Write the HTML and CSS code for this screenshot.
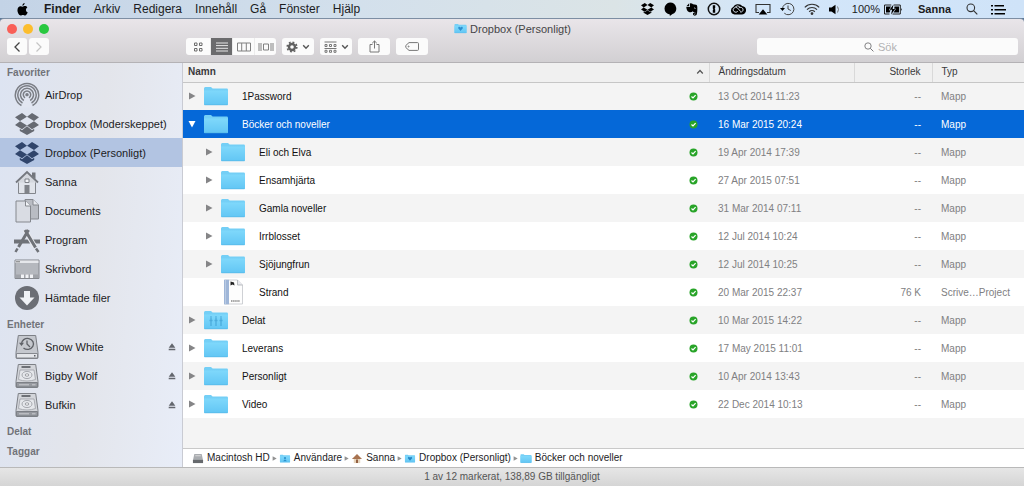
FILE: index.html
```html
<!DOCTYPE html>
<html lang="sv">
<head>
<meta charset="utf-8">
<title>Dropbox (Personligt)</title>
<link rel="stylesheet" href="styles.css">
</head>
<body>
<svg class="defs" aria-hidden="true">
  <defs>
    <linearGradient id="blue" x1="0" y1="0" x2="0" y2="1"><stop offset="0" stop-color="#7fd8fb"/><stop offset="1" stop-color="#62c6f4"/></linearGradient>
    <symbol id="folder" viewBox="0 0 26 20"><path d="M1 2.5Q1 1 2.3 1H8l1.600 1.600h14.2Q25 2.600 25 4v14q0 1-1 1H2q-1 0-1-1z" fill="#74cff6"/><path d="M1 4.500h24v13.500q0 1-1 1H2q-1 0-1-1z" fill="url(#blue)"/><path d="M1.500 18.800h23" stroke="#58b7e6" stroke-width=".7"/></symbol>
    <symbol id="dropbox" viewBox="0 0 24 22"><path d="M7 0l5 3.800-7 4.200-5-3.800zM17 0l7 4.200L19 8l-7-4.200zM0 12l5-3.800 7 4.200-5 3.800zM19 8.200l5 3.800-7 4.200-5-3.800zM7 17.200l5-4 5 4 2.200-1.400v2.200L12 22l-7.200-4v-2.200z"/></symbol>
    <symbol id="tri" viewBox="0 0 8 8"><path d="M1 .5l6.500 3.500L1 7.500z"/></symbol>
    <symbol id="synced" viewBox="0 0 9 9"><circle cx="4.500" cy="4.500" r="4" fill="#28a428"/><path d="M2.500 4.500l1.500 1.500 2.600-2.800" fill="none" stroke="#fff" stroke-width="1.200"/></symbol>
    <symbol id="eject" viewBox="0 0 8 8"><path d="M4 .3L7.300 4.700H.7zM.7 5.800h6.600v1.500H.7z"/></symbol>
    <symbol id="chevron" viewBox="0 0 8 6"><path d="M1.200 1.300L4 4.200l2.800-2.900" fill="none" stroke="#555" stroke-width="1.400"/></symbol>
    <symbol id="search" viewBox="0 0 12 12"><circle cx="4.800" cy="4.800" r="3.800" fill="none" stroke="currentColor" stroke-width="1.100"/><path d="M7.600 7.600l3.700 3.700" stroke="currentColor" stroke-width="1.200"/></symbol>
    <symbol id="disk" viewBox="0 0 26 26"><path d="M4.300 1.500h17.400l2.300 17v5q0 1-1 1H3q-1 0-1-1v-5z" fill="#d3d5da" stroke="#7d8086"/><path d="M2.500 19.500h21v4.500h-21z" fill="#96999f" stroke="#7d8086"/><path d="M7.500 3h9v2h-9z" fill="#6d7076"/><path d="M6 7h14l1.500 9.500q-4 1.500-8.500 1.500t-8.500-1.500z" fill="#e5e7eb" stroke="#9da0a6" stroke-width=".8"/><ellipse cx="13" cy="12" rx="5" ry="3.600" fill="none" stroke="#95989e" stroke-width=".8"/><ellipse cx="13" cy="12" rx="1.800" ry="1.200" fill="#fff" stroke="#85888e" stroke-width=".8"/><path d="M5 21.800h10M18 21.800h3.500" stroke="#c9cbd0"/></symbol>
  </defs>
</svg>

<header class="menubar">
  <svg class="apple" viewBox="0 0 12 14"><path d="M8.300 0c.1 1.500-1 2.900-2.400 3C5.700 1.600 7 .2 8.300 0zM6.200 3.900c.6 0 1.300-.6 2.500-.6 1 0 2 .5 2.600 1.400-2.300 1.400-1.900 4.400.4 5.300C11 12 9.900 13.500 8.800 13.500c-.9 0-1.300-.5-2.400-.5s-1.500.5-2.400.5C2.300 13.500.5 10.400.5 7.800c0-2.700 1.700-4.300 3.400-4.300 1 0 1.800.4 2.300.4z"/></svg>
  <nav class="menus">
    <button class="app">Finder</button><button>Arkiv</button><button>Redigera</button><button>Innehåll</button><button>Gå</button><button>Fönster</button><button>Hjälp</button>
  </nav>
  <div class="extras">
    <svg width="13" height="12"><use href="#dropbox"/></svg>
    <svg width="14" height="14" viewBox="0 0 14 14"><path d="M7 .6a6.200 6 0 0 1 2.500 11.500L6.800 14v-1.500A6.200 6 0 0 1 7 .6z"/></svg>
    <svg width="12" height="13" viewBox="0 0 12 13"><path d="M3.200 .3v2.900H.4zM4 .2l2 .2 1 .8 3 .5c1 .2 1.200 1 1.300 2.500.1 3 0 5.500-.6 7.300-.4 1.400-3.100 1.500-3.600.3-.5-1.600.6-2.500 2.100-2.200v1.200c-.8-.2-1.200.2-.8.8.9.300 1.100-.8.900-2.300-1 .2-2.100-.2-2.600-1-.7 1-2.400 1-3.800.6C1.200 8.500.5 6.400.3 4h3.100c.4 0 .6-.2.6-.6z"/><path d="M8 5.300q.8-.8 1.500.2" stroke="#dfeaf6" stroke-width=".8" fill="none"/></svg>
    <svg width="14" height="14" viewBox="0 0 14 14"><circle cx="7" cy="7" r="5.700" fill="none" stroke="#111" stroke-width="1.500"/><path d="M5.800 3.300h2.400v2.800l-.6.600.6.700v3.300H5.800V7.900l.6-.6-.6-.7z"/></svg>
    <svg width="16" height="12" viewBox="0 0 16 12"><path d="M4.500 11.500A4 4 0 0 1 3.500 3.800a5 4.500 0 0 1 8.500-.9 4.300 4.300 0 0 1-.5 8.600z"/><path d="M7.800 8.300a2.600 2.400 0 1 1-.2-3.200l3.200 3.600M5.500 3.600q2.500-1.800 4.500.5M8.800 4.900a2.600 2.400 0 1 1 1.500 4.200" fill="none" stroke="#dfeaf6" stroke-width=".9"/></svg>
    <svg width="16" height="13" viewBox="0 0 16 13"><path d="M4 9.500H1v-8h14v8h-3" fill="none" stroke="#333" stroke-width="1.100"/><path d="M8 6.300l4.300 5.200H3.700z"/></svg>
    <svg width="15" height="14" viewBox="0 0 15 14"><path d="M2.500 7a5.700 5.700 0 1 1 1.800 4.200M8 3.500V7l2.800 1.500" fill="none" stroke="#444"/><path d="M0 6h5L2.500 9z"/></svg>
    <svg width="16" height="12" viewBox="0 0 16 12" fill="none" stroke="#333" stroke-width="1.200"><path d="M.8 4.300a10 10 0 0 1 14.400 0M3 6.600a7 7 0 0 1 10 0M5.200 8.800a4 4 0 0 1 5.600 0"/><circle cx="8" cy="10.600" r=".8" fill="#222"/></svg>
    <svg width="11" height="11" viewBox="0 0 11 11"><path d="M0 3.500h2.500L6.500.7v9.600L2.500 7.500H0z"/><path d="M8.500 2.500q2 3 0 6" fill="none" stroke="#777"/></svg>
    <span class="percent">100%</span>
    <svg width="19" height="11" viewBox="0 0 19 11"><path d="M.5 1h6.800M.5 10h5M.5 1v9M9.800 1h6.500v9H8.500" fill="none" stroke="#222"/><path d="M2 2.500h5L4.800 6.200h1.700L5.600 8.500H2zM10.500 2.500h4.500v6H9.500l2.500-3.700h-1.800zM9.500.5L5.500 5.800h2.600L7 10.500l4.300-5.400H8.600zM17.200 4q1.500 1.500 0 3z"/></svg>
    <span class="user">Sanna</span>
    <svg width="12" height="12" color="#333"><use href="#search"/></svg>
    <svg width="15" height="11" viewBox="0 0 15 11"><path d="M0 1h2v1.500H0zM0 5h2v1.500H0zM0 9h2v1.500H0zM3.500 1H13v1.500H3.500zM3.500 5H15v1.500H3.500zM3.500 9H14v1.500H3.500z"/></svg>
  </div>
</header>

<div class="window">
  <header class="toolbar">
    <div class="titlebar">
      <div class="lights"><button class="close" aria-label="Stäng"></button><button class="mini" aria-label="Minimera"></button><button class="full" aria-label="Helskärm"></button></div>
      <h1><svg width="13" height="11"><use href="#folder"/><path d="M5 3.500l1.500 1L8 3.500l1 1.500-2.500 3L4 5z" fill="#2d8fd0"/></svg>Dropbox (Personligt)</h1>
    </div>
    <div class="tools">
      <div class="history">
        <button aria-label="Bakåt"><svg width="8" height="12" viewBox="0 0 8 12"><path d="M6.500 1.500L2 6l4.500 4.500" fill="none" stroke="#444" stroke-width="1.300"/></svg></button>
        <button aria-label="Framåt"><svg width="8" height="12" viewBox="0 0 8 12"><path d="M1.500 1.500L6 6l-4.500 4.500" fill="none" stroke="#c4c4c4" stroke-width="1.200"/></svg></button>
      </div>
      <div class="views">
        <button aria-label="Symboler"><svg width="9" height="10" viewBox="0 0 9 10" fill="none" stroke="#6c6c6c"><path d="M.5 1h2.500v2.500H.5zM5.500 1H8v2.500H5.500zM.5 6.500h2.500V9H.5zM5.500 6.500H8V9H5.500z"/></svg></button>
        <button class="on" aria-label="Lista"><svg width="12" height="10" viewBox="0 0 12 10"><path d="M0 1h12M0 3.600h12M0 6.300h12M0 9h12" stroke="#e6e6e6"/></svg></button>
        <button aria-label="Kolumner"><svg width="14" height="10" viewBox="0 0 14 10" fill="none" stroke="#808080"><path d="M.5 1h13v8H.500zM4.700 1v8M9.300 1v8"/></svg></button>
        <button aria-label="Cover Flow"><svg width="16" height="10" viewBox="0 0 16 10" fill="none" stroke="#808080"><path d="M1 1v8M3 1v8M5.500 2h5v6h-5zM13 1v8M15 1v8"/></svg></button>
      </div>
      <button class="tool" aria-label="Åtgärd"><svg width="12" height="12" viewBox="0 0 12 12"><circle cx="6" cy="6" r="3" fill="none" stroke="#606060" stroke-width="2.400"/><circle cx="6" cy="6" r="4.800" fill="none" stroke="#606060" stroke-width="1.600" stroke-dasharray="1.880"/></svg><svg width="8" height="6"><use href="#chevron"/></svg></button>
      <button class="tool" aria-label="Ordna"><svg width="13" height="12" viewBox="0 0 13 12" fill="none" stroke="#777"><path d="M.5 1h12M1 3.500h2v2H1zM5.500 3.500h2v2h-2zM10 3.500h2v2h-2zM.5 7.500h12M1 9.300h2v2H1zM5.500 9.300h2v2h-2zM10 9.300h2v2h-2z"/></svg><svg width="8" height="6"><use href="#chevron"/></svg></button>
      <button class="tool" aria-label="Dela"><svg width="11" height="13" viewBox="0 0 11 13" fill="none" stroke="#777"><path d="M3.500 4.500H1v7.500h9V4.500H7.500M5.500 8.500V1M3.200 3.200L5.500 1l2.300 2.200"/></svg></button>
      <button class="tool" aria-label="Etiketter"><svg width="14" height="9" viewBox="0 0 14 9" fill="none" stroke="#777"><path d="M4 .6h8.500q1 0 1 1v5.800q0 1-1 1H4L.8 5.500v-2z"/><circle cx="3.600" cy="4.500" r=".5"/></svg></button>
      <label class="search"><svg width="10" height="10"><use href="#search"/></svg><input type="text" placeholder="Sök" aria-label="Sök"></label>
    </div>
  </header>

  <div class="content">
    <aside class="sidebar">
      <h2>Favoriter</h2>
      <ul>
        <li><a href="#"><svg viewBox="0 0 26 26" fill="none" stroke="#7b7e85" stroke-width="1.500"><path d="M7.500 23.500a11.700 11.700 0 1 1 11 0M8.500 21a9.200 9.200 0 1 1 9 0M9.800 18.500a6.500 6.500 0 1 1 6.400 0M11 15.800a3.700 3.700 0 1 1 4 0"/><circle cx="13" cy="12.700" r="1" fill="#6b6e75"/><path d="M13 14l-6 11.500h12z" fill="#e2e6f1" stroke="none"/></svg>AirDrop</a></li>
        <li><a href="#"><svg class="box" viewBox="0 0 24 22"><use href="#dropbox"/></svg>Dropbox (Moderskeppet)</a></li>
        <li class="current"><a href="#"><svg class="box" viewBox="0 0 24 22"><use href="#dropbox"/></svg>Dropbox (Personligt)</a></li>
        <li><a href="#"><svg viewBox="0 0 26 26"><path d="M4.500 12.500h17v12h-17z" fill="#e1e4ea" stroke="#83868c"/><path d="M18 3.500h3.500V10L18 7z" fill="#73767c"/><path d="M2 13.500L13 3l11 10.500" fill="#d5d8de" stroke="#75787e" stroke-width="1.800"/><path d="M10.500 16h5v9h-5z" fill="#7f8288"/><path d="M11 10h4v3.500h-4z" fill="#f3f4f8" stroke="#7f8288"/></svg>Sanna</a></li>
        <li><a href="#"><svg viewBox="0 0 26 26" stroke="#85888e"><path d="M11 1.500h8l5.500 5.500v14H11z" fill="#b9bcc3"/><path d="M19 1.500V7h5.500" fill="#e7e9ee"/><path d="M2 3h9.500l5 5v16H2z" fill="#d9dce3"/><path d="M11.500 3v5h5" fill="#f2f4f8"/></svg>Documents</a></li>
        <li><a href="#"><svg viewBox="0 0 26 26" stroke="#6f7278" fill="none"><path d="M0 14.500h26" stroke-width="4"/><path d="M11 3l10 17" stroke="#e9ebf0" stroke-width="5"/><path d="M14.500 3L4.500 20M11 3l10.500 17.500" stroke-width="3"/><path d="M3.500 21.500L1.500 25M22 21.500l2.500 3.500" stroke-width="2.500"/></svg>Program</a></li>
        <li><a href="#"><svg viewBox="0 0 26 26"><path d="M1 4h24v18.500H1z" fill="#b5b8be" stroke="#85888e"/><path d="M1.500 4.500h23v2.500h-23z" fill="#e5e7eb"/><path d="M2 5.800h4" stroke="#777"/><path d="M1.500 18.500h23V22h-23z" fill="#a0a3a9"/><path d="M7 18.500h3V22H7zM11.500 18.500h3V22h-3zM16 18.500h3V22h-3z" fill="#f1f2f5"/></svg>Skrivbord</a></li>
        <li><a href="#"><svg viewBox="0 0 26 26"><circle cx="13" cy="13" r="12" fill="#6b6e75"/><path d="M10 6h6v6.500h4.500L13 20.500l-7.500-8H10z" fill="#f0f2f6"/></svg>Hämtade filer</a></li>
      </ul>
      <h2 class="spaced">Enheter</h2>
      <ul>
        <li><a href="#"><svg viewBox="0 0 26 26"><path d="M4.300 1.500h17.400l2.300 17v5q0 1-1 1H3q-1 0-1-1v-5z" fill="#c5c8ce" stroke="#7d8086"/><path d="M2.500 19.500h21V24h-21z" fill="#e4e6ea" stroke="#85888e"/><path d="M7.500 10a6 5.500 0 1 1 2 4M13 6.500V10l3 3" fill="none" stroke="#5e6167" stroke-width="1.300"/><path d="M5 8.800h5L7.500 12zM20 21h1.500v1.500H20z" fill="#5e6167"/></svg>Snow White</a><button aria-label="Mata ut Snow White"><svg width="8" height="8"><use href="#eject"/></svg></button></li>
        <li><a href="#"><svg><use href="#disk"/></svg>Bigby Wolf</a><button aria-label="Mata ut Bigby Wolf"><svg width="8" height="8"><use href="#eject"/></svg></button></li>
        <li><a href="#"><svg><use href="#disk"/></svg>Bufkin</a><button aria-label="Mata ut Bufkin"><svg width="8" height="8"><use href="#eject"/></svg></button></li>
      </ul>
      <h2 class="spaced">Delat</h2>
      <h2 class="spaced">Taggar</h2>
    </aside>

    <main class="files">
      <table>
        <colgroup><col><col class="c-date"><col class="c-size"><col class="c-type"></colgroup>
        <thead><tr><th class="sorted"><div>Namn<svg width="8" height="6" viewBox="0 0 8 6"><path d="M1.200 4.500L4 1.500l2.800 3" fill="none" stroke="#555" stroke-width="1.200"/></svg></div></th><th>Ändringsdatum</th><th class="size">Storlek</th><th>Typ</th></tr></thead>
        <tbody>
          <tr><td><div class="name"><button aria-label="Visa"><svg><use href="#tri"/></svg></button><svg class="icon"><use href="#folder"/></svg><span>1Password</span><svg class="ok"><use href="#synced"/></svg></div></td><td>13 Oct 2014 11:23</td><td class="size">--</td><td>Mapp</td></tr>
          <tr class="selected"><td><div class="name"><button class="open" aria-label="Dölj"><svg><use href="#tri"/></svg></button><svg class="icon"><use href="#folder"/></svg><span>Böcker och noveller</span><svg class="ok"><use href="#synced"/></svg></div></td><td>16 Mar 2015 20:24</td><td class="size">--</td><td>Mapp</td></tr>
          <tr><td><div class="name child"><button aria-label="Visa"><svg><use href="#tri"/></svg></button><svg class="icon"><use href="#folder"/></svg><span>Eli och Elva</span><svg class="ok"><use href="#synced"/></svg></div></td><td>19 Apr 2014 17:39</td><td class="size">--</td><td>Mapp</td></tr>
          <tr><td><div class="name child"><button aria-label="Visa"><svg><use href="#tri"/></svg></button><svg class="icon"><use href="#folder"/></svg><span>Ensamhjärta</span><svg class="ok"><use href="#synced"/></svg></div></td><td>27 Apr 2015 07:51</td><td class="size">--</td><td>Mapp</td></tr>
          <tr><td><div class="name child"><button aria-label="Visa"><svg><use href="#tri"/></svg></button><svg class="icon"><use href="#folder"/></svg><span>Gamla noveller</span><svg class="ok"><use href="#synced"/></svg></div></td><td>31 Mar 2014 07:11</td><td class="size">--</td><td>Mapp</td></tr>
          <tr><td><div class="name child"><button aria-label="Visa"><svg><use href="#tri"/></svg></button><svg class="icon"><use href="#folder"/></svg><span>Irrblosset</span><svg class="ok"><use href="#synced"/></svg></div></td><td>12 Jul 2014 10:24</td><td class="size">--</td><td>Mapp</td></tr>
          <tr><td><div class="name child"><button aria-label="Visa"><svg><use href="#tri"/></svg></button><svg class="icon"><use href="#folder"/></svg><span>Sjöjungfrun</span><svg class="ok"><use href="#synced"/></svg></div></td><td>12 Jul 2014 10:25</td><td class="size">--</td><td>Mapp</td></tr>
          <tr><td><div class="name child"><i></i><svg class="icon doc" viewBox="0 0 26 26"><path d="M4.500 1h13l5 5v19h-18z" fill="#fdfdfd" stroke="#c3c5ca" stroke-width=".8"/><path d="M4 .8h5v24.500H4z" fill="#9fb6d8"/><path d="M5.500 1v24" stroke="#bacbe3"/><path d="M17.500 1v5h5" fill="#e9eaee" stroke="#aaadb3" stroke-width=".8"/><path d="M10.500 2.500l3.500 1 .5 3-2-1-2 1z" fill="#222"/><path d="M11 22h9" stroke="#888" stroke-width="1.500" stroke-dasharray="1.500 .6"/></svg><span>Strand</span><svg class="ok"><use href="#synced"/></svg></div></td><td>20 Mar 2015 22:37</td><td class="size">76 K</td><td>Scrive…Project</td></tr>
          <tr><td><div class="name"><button aria-label="Visa"><svg><use href="#tri"/></svg></button><svg class="icon" viewBox="0 0 26 20"><use href="#folder"/><path d="M8 8v8M13 8v8M18 8v8M6.500 10.500h3M11.500 10.500h3M16.500 10.500h3" stroke="#4bacdc" stroke-width="1.300"/><path d="M7.300 7h1.400M12.300 7h1.400M17.300 7h1.400" stroke="#4bacdc" stroke-width="1.500"/></svg><span>Delat</span><svg class="ok"><use href="#synced"/></svg></div></td><td>10 Mar 2015 14:22</td><td class="size">--</td><td>Mapp</td></tr>
          <tr><td><div class="name"><button aria-label="Visa"><svg><use href="#tri"/></svg></button><svg class="icon"><use href="#folder"/></svg><span>Leverans</span><svg class="ok"><use href="#synced"/></svg></div></td><td>17 May 2015 11:01</td><td class="size">--</td><td>Mapp</td></tr>
          <tr><td><div class="name"><button aria-label="Visa"><svg><use href="#tri"/></svg></button><svg class="icon"><use href="#folder"/></svg><span>Personligt</span><svg class="ok"><use href="#synced"/></svg></div></td><td>10 Apr 2014 13:43</td><td class="size">--</td><td>Mapp</td></tr>
          <tr><td><div class="name"><button aria-label="Visa"><svg><use href="#tri"/></svg></button><svg class="icon"><use href="#folder"/></svg><span>Video</span><svg class="ok"><use href="#synced"/></svg></div></td><td>22 Dec 2014 10:13</td><td class="size">--</td><td>Mapp</td></tr>
        </tbody>
      </table>
      <div class="blank"></div>
      <nav class="path">
        <a href="#"><svg viewBox="0 0 12 12"><path d="M2 1h8l1.500 7v3H.5V8z" fill="#a9acb0"/><path d="M.5 7.500h11V11H.5z" fill="#66696d"/><path d="M3 3h6" stroke="#ddd"/></svg>Macintosh HD</a><svg class="sep"><use href="#tri"/></svg>
        <a href="#"><svg viewBox="0 0 12 12"><use href="#folder"/><circle cx="6" cy="5.500" r="1.200" fill="#2c92cd"/><path d="M4 9q2-4 4 0z" fill="#2c92cd"/></svg>Användare</a><svg class="sep"><use href="#tri"/></svg>
        <a href="#"><svg viewBox="0 0 12 12"><path d="M2.500 5.500h7V11h-7z" fill="#e5d3bb"/><path d="M6 1l5.500 5.500H.5z" fill="#a87350"/><path d="M5 7h2v4H5z" fill="#8b5636"/></svg>Sanna</a><svg class="sep"><use href="#tri"/></svg>
        <a href="#"><svg viewBox="0 0 12 12"><use href="#folder"/><path d="M4.500 4L6 5l1.500-1 1 1.500L6 8.500 3.500 5.500z" fill="#2484c4"/></svg>Dropbox (Personligt)</a><svg class="sep"><use href="#tri"/></svg>
        <a href="#"><svg><use href="#folder"/></svg>Böcker och noveller</a>
      </nav>
    </main>
  </div>
  <footer class="status">1 av 12 markerat, 138,89 GB tillgängligt</footer>
</div>
</body>
</html>
```
FILE: styles.css
```css
* { box-sizing: border-box; }
body {
  margin: 0;
  min-height: 100vh;
  display: flex;
  flex-direction: column;
  font: 10px/14px "Liberation Sans", Arial, sans-serif;
  color: #1c1c1e;
  background: #5c7898;
}
button { font: inherit; color: inherit; border: 0; padding: 0; background: none; display: flex; align-items: center; justify-content: center; }
a { color: inherit; text-decoration: none; }
ul { list-style: none; margin: 0; padding: 0; }
svg { flex: none; display: block; }
.defs { position: absolute; width: 0; height: 0; }

.menubar {
  display: flex;
  align-items: center;
  height: 18px;
  padding: 0 18px 0 17px;
  font-size: 12px;
  background: linear-gradient(90deg, #c3d3e6, #d3e0ec 35%, #dbe4e6 60%, #d3e6fa 75%, #cfe3f8);
}
.apple { width: 11px; height: 13px; margin-right: 16px; }
.menus { display: flex; gap: 13px; }
.app, .user { font-weight: bold; }
.extras { display: flex; align-items: center; gap: 9px; margin-left: auto; }
.percent { font-size: 11px; margin-left: 3px; margin-right: -5px; }
.user { font-size: 11px; margin: 0 6px; }
.extras svg:last-child { margin-left: 4px; }

.window { flex: 1; display: flex; flex-direction: column; }
.toolbar {
  padding: 0 6px 7px 7px;
  border-top: 1px solid #7d8ea3;
  border-bottom: 1px solid #b4b2b5;
  border-radius: 4px 4px 0 0;
  background: linear-gradient(#e9e5e9, #d2d0d3);
}
.titlebar { display: grid; grid-template-columns: 1fr auto 1fr; align-items: center; height: 19px; }
.lights { display: flex; gap: 6px; }
.lights button { width: 10px; height: 10px; border-radius: 50%; }
.close { background: #f95f57; }
.mini { background: #fcbd2e; }
.full { background: #29c840; }
.titlebar h1 { display: flex; align-items: center; gap: 3px; margin: 0; font-size: 11px; font-weight: normal; color: #454547; }
.tools { display: flex; gap: 6px; height: 17px; }
.history { display: flex; gap: 2px; width: 173px; }
.history button { width: 20px; }
.history button, .views, .tool, .search { background: #fbfbfb; border-radius: 3px; }
.views { display: flex; overflow: hidden; }
.views button { width: 22px; border-left: 1px solid #ececec; }
.views button:first-child { width: 24px; border: 0; }
.views .on { background: #6b6b6d; }
.tool { width: 32px; gap: 4px; }
.search { display: flex; align-items: center; justify-content: center; gap: 4px; width: 261px; margin-left: auto; color: #77777a; }
.search input { width: 33px; padding: 0; border: 0; outline: 0; background: none; font: 11px "Liberation Sans", Arial, sans-serif; }
.search input::placeholder { color: #b2b2b4; opacity: 1; }

.content { flex: 1; display: flex; background: #fff; }
.sidebar {
  flex: none;
  width: 183px;
  border-right: 1px solid #c9cbd3;
  background: linear-gradient(95deg, #dde4f2, #e3e5eb 50%, #e8edf8);
}
.sidebar h2 { margin: 0; padding: 3px 7px 0; font-size: 10px; line-height: 14px; color: #717379; }
.sidebar .spaced { padding-top: 6px; }
.sidebar li { display: flex; align-items: center; height: 29px; padding: 0 6px 0 14px; font-size: 11px; }
.sidebar .current { background: #b2c4e2; }
.sidebar a { display: flex; flex: 1; align-items: center; gap: 5px; }
.sidebar a svg { width: 26px; height: 26px; }
.sidebar .box { padding: 1px; fill: #666a72; }
.sidebar .current .box { fill: #30456b; }
.sidebar li button svg { fill: #63666d; }

.files { flex: 1; min-width: 0; display: flex; flex-direction: column; }
table { width: 100%; table-layout: fixed; border-collapse: collapse; }
.c-date { width: 145px; }
.c-size { width: 78px; }
.c-type { width: 92px; }
th {
  height: 19px;
  padding: 0 9px;
  border-bottom: 1px solid #c6c6c6;
  border-left: 1px solid #d9d9d9;
  background: #f0f0f0;
  font-weight: normal;
  text-align: left;
  color: #3a3a3c;
}
.sorted { border-left: 0; padding: 0 5px; font-weight: bold; }
.sorted div { display: flex; align-items: center; justify-content: space-between; }
td { height: 28px; padding: 2px 9px 0; color: #808082; white-space: nowrap; }
th.size, td.size { text-align: right; padding-right: 11px; }
tbody tr:nth-child(odd) { background: #f4f4f4; }
tbody .selected, tbody .selected td { background: #0568d8; color: #fff; }
td:first-child { padding: 0 11px 0 5px; }
.name { display: flex; align-items: center; color: #111; }
.name span { padding-top: 1px; }
.selected .name { color: #fff; }
.child { padding-left: 17px; }
.name button svg { width: 8px; height: 8px; fill: #858587; }
.name i { width: 8px; }
.name .open svg { transform: rotate(90deg); fill: #fff; }
.name .icon { width: 26px; height: 20px; margin: 0 13px 0 7px; }
.name .doc { height: 26px; }
.ok { width: 9px; height: 9px; margin-left: auto; }
.blank { flex: 1; min-height: 28px; background: #f4f4f4; border-bottom: 1px solid #c9c9c9; }
.path { display: flex; align-items: center; gap: 2px; height: 18px; padding-left: 9px; }
.path a { display: flex; align-items: center; gap: 3px; }
.path a svg { width: 12px; height: 11px; }
.path .sep { width: 5px; height: 5px; fill: #929292; }
.status { height: 19px; border-top: 1px solid #b9b9b9; background: linear-gradient(#e6e6e6, #d5d5d5); text-align: center; line-height: 18px; color: #555; }
```
